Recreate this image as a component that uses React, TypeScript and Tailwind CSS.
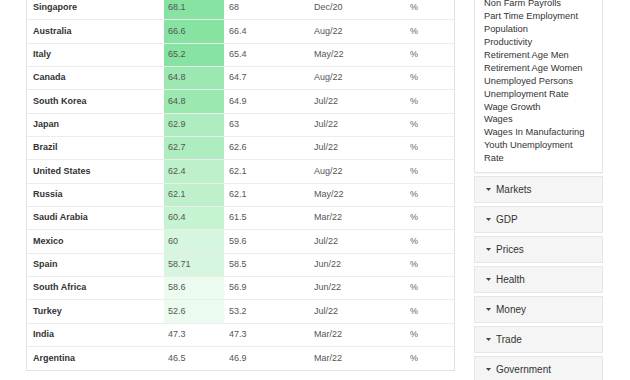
import React from "react";

type Row = { c: string; v: string; p: string; d: string; bg: string };

const rows: Row[] = [
  { c: "Singapore", v: "68.1", p: "68", d: "Dec/20", bg: "bg-[#86e3a1]" },
  { c: "Australia", v: "66.6", p: "66.4", d: "Aug/22", bg: "bg-[#86e3a1]" },
  { c: "Italy", v: "65.2", p: "65.4", d: "May/22", bg: "bg-[#86e3a1]" },
  { c: "Canada", v: "64.8", p: "64.7", d: "Aug/22", bg: "bg-[#9be8b0]" },
  { c: "South Korea", v: "64.8", p: "64.9", d: "Jul/22", bg: "bg-[#9be8b0]" },
  { c: "Japan", v: "62.9", p: "63", d: "Jul/22", bg: "bg-[#adedbf]" },
  { c: "Brazil", v: "62.7", p: "62.6", d: "Jul/22", bg: "bg-[#adedbf]" },
  { c: "United States", v: "62.4", p: "62.1", d: "Aug/22", bg: "bg-[#bef1cb]" },
  { c: "Russia", v: "62.1", p: "62.1", d: "May/22", bg: "bg-[#bef1cb]" },
  { c: "Saudi Arabia", v: "60.4", p: "61.5", d: "Mar/22", bg: "bg-[#c6f3d1]" },
  { c: "Mexico", v: "60", p: "59.6", d: "Jul/22", bg: "bg-[#d6f6df]" },
  { c: "Spain", v: "58.71", p: "58.5", d: "Jun/22", bg: "bg-[#d6f6df]" },
  { c: "South Africa", v: "58.6", p: "56.9", d: "Jun/22", bg: "bg-[#ebfbef]" },
  { c: "Turkey", v: "52.6", p: "53.2", d: "Jul/22", bg: "bg-[#ebfbef]" },
  { c: "India", v: "47.3", p: "47.3", d: "Mar/22", bg: "" },
  { c: "Argentina", v: "46.5", p: "46.9", d: "Mar/22", bg: "" },
];

const list = [
  "Non Farm Payrolls",
  "Part Time Employment",
  "Population",
  "Productivity",
  "Retirement Age Men",
  "Retirement Age Women",
  "Unemployed Persons",
  "Unemployment Rate",
  "Wage Growth",
  "Wages",
  "Wages In Manufacturing",
  "Youth Unemployment Rate",
];

const acc = ["Markets", "GDP", "Prices", "Health", "Money", "Trade", "Government"];

export default function App() {
  return (
    <div
      className="w-[630px] h-[380px] overflow-hidden bg-white flex"
      style={{ fontFamily: '"Liberation Sans", Arial, sans-serif' }}
    >
      <div className="ml-[26px] w-[429px] -mt-[4px] self-start shrink-0 border border-[#e2e2e2]">
        {rows.map((r, i) => (
          <div
            key={i}
            className={`flex h-[23.333px] items-center text-[9px] ${i < rows.length - 1 ? "border-b border-[#ececec]" : ""}`}
          >
            <div className="w-[137px] pl-[6px] font-bold text-[#333]">{r.c}</div>
            <div className={`w-[60px] h-full flex items-center pl-[4px] text-[#555] ${r.bg}`}>{r.v}</div>
            <div className="w-[85px] pl-[5px] text-[#555]">{r.p}</div>
            <div className="w-[96px] pl-[5px] text-[#555]">{r.d}</div>
            <div className="flex-1 pl-[5px] text-[#666]">%</div>
          </div>
        ))}
      </div>
      <div className="ml-[19px] w-[129px] shrink-0 flex flex-col">
        <div className="-mt-[14px] h-[187px] shrink-0 border border-[#e4e4e4] bg-white pt-[10.3px] pl-[9px] pr-[12px] shadow-[0_1px_1px_rgba(0,0,0,0.04)]">
          {list.map((t) => (
            <div key={t} className="text-[9.3px] leading-[12.9px] text-[#333]">
              {t}
            </div>
          ))}
        </div>
        <div className="mt-[3px] shrink-0 flex flex-col gap-[3px]">
          {acc.map((a) => (
            <div
              key={a}
              className="h-[27px] shrink-0 flex items-center bg-[#f5f5f5] border border-[#e6e6e6] pl-[11px] text-[10px] text-[#333]"
            >
              <svg width="5" height="3" viewBox="0 0 5 3" className="mr-[5px]">
                <path d="M0 0 H5 L2.5 3 Z" fill="#444" />
              </svg>
              {a}
            </div>
          ))}
        </div>
      </div>
    </div>
  );
}
